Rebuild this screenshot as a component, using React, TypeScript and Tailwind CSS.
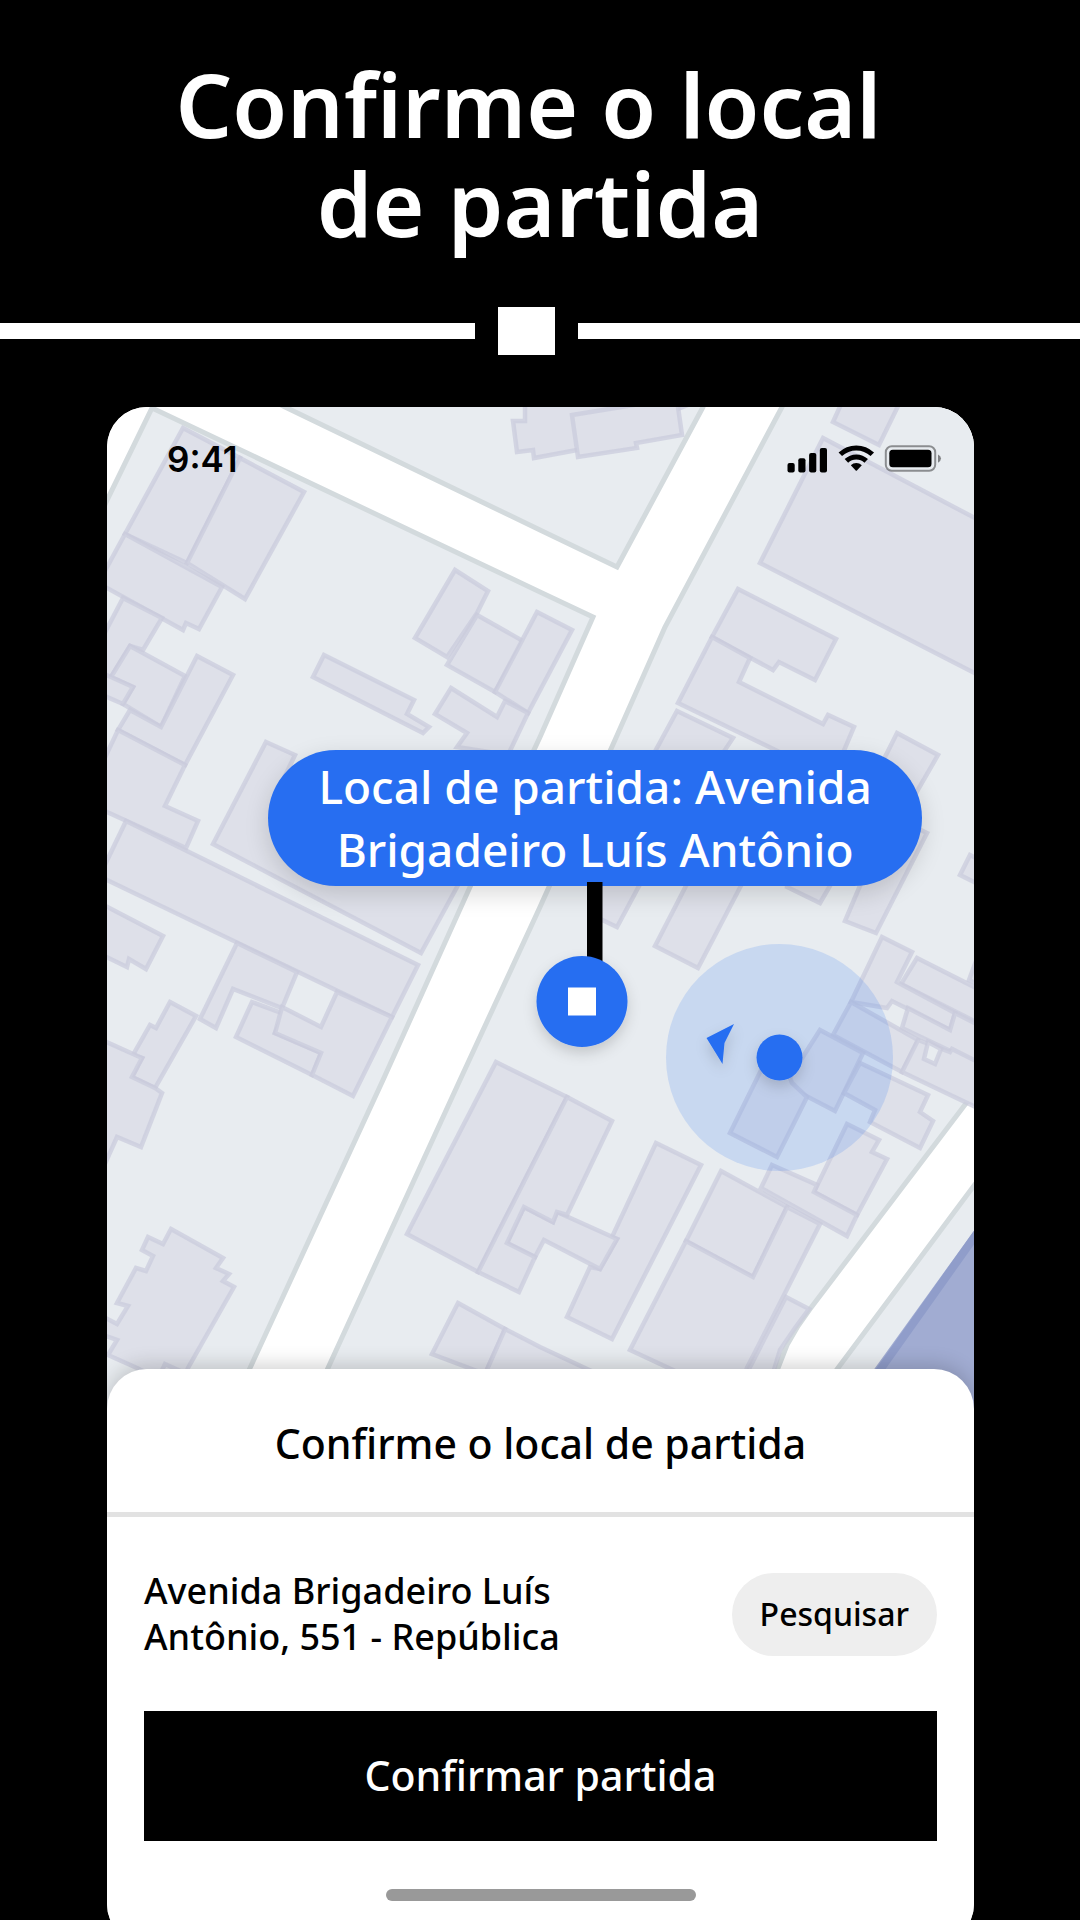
import React from 'react';

// All map geometry shares one coordinate space, see MAP_VIEW_BOX.
const MAP_VIEW_BOX = '107 407 867 1002';

const blocks = [
    '152,408 540,592 593,617 540,737 470,887 383,1080 250,1368 230,1412 90,1412 90,535',
    '285,407 540,530 617,567 703,407 703,395 262,395',
    '782,407 665,627 615,740 540,907 460,1080 328,1368 308,1412 760,1412 778,1368 787,1345 798,1326 810,1309 964,1106 990,1072 990,395 788,395',
    '990,1164 973,1187 838,1368 806,1412 990,1412'
];

const buildings = [
    // west side
    '183,428 240,458 187,563 125,534',
    '240,458 304,492 245,599 187,563',
    '125,534 222,587 199,629 186,623 183,630 107,588 100,585 100,580',
    '123,598 162,618 143,650 130,646 111,677 100,696 100,642',
    '130,646 185,676 161,727 123,704 133,687 111,677',
    '100,672 111,677 133,687 123,704 100,694',
    '197,656 233,675 185,765 118,730 130,710 161,727',
    '118,730 185,765 165,806 198,821 186,848 107,812 100,809 100,768',
    '126,821 418,965 392,1017 107,880 100,876 100,875',
    '266,742 295,755 283,780 482,840 457,887 421,953 213,844',
    '100,903 163,936 146,969 129,959 127,967 100,954',
    '237,943 297,972 282,1008 233,989 216,1028 200,1019',
    '252,1002 284,1014 275,1033 321,1053 312,1075 236,1037',
    '337,992 392,1017 353,1096 312,1075 321,1053 275,1033 282,1007 321,1027',
    '170,1002 196,1016 155,1088 132,1077 142,1058 133,1055 150,1025 156,1028',
    '100,1039 142,1058 132,1077 155,1088 162,1093 141,1147 117,1137 100,1175',
    '171,1229 223,1258 216,1268 229,1274 223,1281 234,1287 188,1368 180,1390 137,1368 108,1355 117,1340 100,1334 100,1315 117,1324 128,1306 117,1303 136,1268 146,1271 153,1256 142,1250 148,1237 163,1244',
    '165,1364 200,1380 190,1400 155,1385',
    // between the two streets
    '455,570 488,591 477,613 447,657 415,638',
    '477,615 523,641 495,692 447,665',
    '537,612 572,630 528,713 495,692',
    '324,655 414,700 407,714 429,727 423,733 313,677',
    '451,688 497,717 505,701 528,713 508,755 457,747 467,733 435,714',
    '525,400 525,421 513,421 517,452 533,450 534,458 577,450 700,400',
    '572,415 640,404 677,400 682,435 636,443 637,448 578,457',
    // east side
    '843,400 833,422 879,445 901,400',
    '823,438 990,526 990,681 760,563',
    '738,589 836,639 815,680 779,662 773,670 712,637',
    '712,637 750,658 739,682 823,724 828,715 854,727 840,760 800,762 678,703',
    '677,711 733,738 660,847 617,927 590,914 645,770',
    '720,820 770,830 698,968 655,946',
    '790,860 845,860 820,903 787,887',
    '897,733 938,755 912,800 870,787',
    '890,815 927,833 876,933 845,921',
    '990,865 970,855 960,875 990,890',
    '990,950 982,945 969,980 990,990',
    '917,958 990,995 990,1029 901,984',
    '882,937 912,952 897,982 955,1013 950,1030 892,1001 887,1008 851,1002',
    '851,1002 918,1040 902,1072 833,1035',
    '908,1008 950,1030 955,1013 990,1031 990,1070 902,1028',
    '918,1040 950,1052 952,1049 990,1068 990,1114 902,1072',
    '820,1030 863,1053 835,1111 785,1085',
    '776,1040 792,1083 807,1097 777,1157 730,1133',
    '860,1063 928,1095 920,1112 933,1121 920,1148 870,1122 875,1110 844,1093',
    '847,1124 879,1140 872,1152 887,1159 857,1215 814,1192',
    '772,1165 817,1185 814,1192 857,1215 847,1236 761,1188',
    '721,1171 787,1207 753,1277 686,1241',
    '787,1207 820,1224 747,1368 735,1400 673,1370 630,1350 686,1241 753,1277',
    '786,1297 809,1309 795,1328 780,1350 765,1400 733,1400',
    '656,1143 701,1165 612,1339 567,1317 590,1267 600,1269 617,1239 612,1237',
    '557,1212 617,1239 600,1269 544,1240 535,1257 507,1243 524,1207 553,1222',
    '496,1062 567,1097 478,1272 407,1234',
    '567,1097 612,1121 567,1215 557,1212 553,1222 524,1207 507,1243 535,1257 519,1292 478,1272',
    '458,1303 505,1329 485,1374 432,1354',
    '505,1329 540,1347 630,1389 620,1410 485,1374'
];

const MapCanvas = () => (
    <svg viewBox={MAP_VIEW_BOX} className="block w-full h-auto bg-white" aria-hidden="true">
        <g fill="#e8ecf0" stroke="#d3dadd" strokeWidth="5">
            {blocks.map((points) => (
                <polygon key={points} points={points} />
            ))}
        </g>
        <g fill="#dee0e9" stroke="#c9cadb" strokeOpacity="0.7" strokeWidth="4.5">
            {buildings.map((points) => (
                <polygon key={points} points={points} />
            ))}
            <polygon points="928,1042 941,1049 935,1064 924,1059" fill="#e8ecf0" />
        </g>
        <polygon points="990,1209 973,1232 875,1368 843,1412 990,1412" fill="#a1acd2" />
        <path d="M990 1215 L973 1239 L880 1370 L850 1412" fill="none" stroke="#909dca" strokeWidth="8" />
    </svg>
);

const MapPins = () => (
    <svg viewBox={MAP_VIEW_BOX} className="absolute inset-0 w-full h-full" aria-hidden="true">
        <defs>
            <filter id="pin-shadow" x="-50%" y="-50%" width="200%" height="200%">
                <feDropShadow dx="0" dy="6" stdDeviation="7" floodColor="#000" floodOpacity="0.16" />
            </filter>
        </defs>
        <circle cx="779.5" cy="1057.5" r="113.5" fill="#276ef1" fillOpacity="0.16" />
        <rect x="587" y="882" width="15.5" height="90" fill="#000" />
        <g fill="#276ef1" filter="url(#pin-shadow)">
            <circle cx="582" cy="1001.5" r="45.5" />
            <circle cx="779.5" cy="1057.5" r="23" />
            <polygon points="734,1024 724.5,1043 722.5,1064 706.5,1038" />
        </g>
        <rect x="568" y="987.5" width="28" height="28" fill="#fff" />
    </svg>
);

const StatusIcons = () => (
    <svg width="156" height="30" viewBox="0 0 156 30" aria-hidden="true">
        <rect x="1.5" y="19" width="7.2" height="9.5" rx="2" />
        <rect x="12.3" y="14.3" width="7.2" height="14.2" rx="2" />
        <rect x="23.1" y="9" width="7.2" height="19.5" rx="2" />
        <rect x="33.8" y="4" width="7.2" height="24.5" rx="2" />
        <g fill="none" stroke="#000" strokeWidth="5">
            <path d="M54.3 10.3 A23.2 23.2 0 0 1 86.3 10.3" />
            <path d="M60.4 16.9 A14.2 14.2 0 0 1 80.2 16.9" />
        </g>
        <path d="M64.8 21.3 A8 8 0 0 1 75.8 21.3 L70.9 26.5 Q70.3 27 69.7 26.5 Z" />
        <rect x="99.8" y="2.2" width="49.4" height="24.6" rx="6" fill="none" stroke="#000" strokeOpacity="0.4" strokeWidth="2" />
        <rect x="103.3" y="5.8" width="42.2" height="17.4" rx="3.5" />
        <path d="M152 10.5 Q155 12 155 14.5 Q155 17 152 18.8 Z" fillOpacity="0.45" />
    </svg>
);

const StatusBar = () => (
    <div className="absolute inset-x-0 top-0 flex items-center justify-between pt-8 pl-[60px] pr-8">
        <span className="font-['Inter'] font-semibold text-[35px] leading-10">9:41</span>
        <StatusIcons />
    </div>
);

const Divider = () => (
    <div className="flex items-center" aria-hidden="true">
        <div className="w-[44%] h-4 bg-white" />
        <div className="mx-[23px] w-[57px] h-12 bg-white" />
        <div className="flex-1 h-4 bg-white" />
    </div>
);

export default function App() {
    return (
        <div className="min-h-screen flex flex-col bg-black overflow-hidden text-black font-['Noto_Sans',sans-serif]">
            <h1 className="pt-[54px] pb-[55px] text-center text-white font-semibold text-[89px] leading-[99px] whitespace-pre">
                {'Confirme o local \nde partida'}
            </h1>
            <Divider />

            <main className="flex-1 flex flex-col mt-[52px] ml-[107px] mr-[106px] -mb-6 rounded-[40px] overflow-hidden bg-white">
                <div className="relative">
                    <MapCanvas />
                    <StatusBar />
                    <div className="absolute left-[18.6%] top-[34.2%] w-[75.4%] py-[5px] rounded-full bg-[#276ef1] text-white text-center font-medium text-[46px] leading-[63px] whitespace-nowrap shadow-[0_8px_24px_rgba(0,0,0,0.15)]">
                        Local de partida: Avenida
                        <br />
                        Brigadeiro Luís Antônio
                    </div>
                    <MapPins />
                </div>

                <section className="relative flex-1 -mt-10 rounded-t-[40px] bg-white shadow-[0_-4px_20px_rgba(0,0,0,0.18)]">
                    <h2 className="pt-12 pb-[43px] border-b-[5px] border-[#e2e2e2] text-center font-medium text-[41px] leading-[52px]">
                        Confirme o local de partida
                    </h2>
                    <div className="px-[37px] pt-[51px]">
                        <div className="flex items-center justify-between">
                            <p className="font-medium text-[36px] leading-[46px] whitespace-nowrap">
                                Avenida Brigadeiro Luís
                                <br />
                                Antônio, 551 - República
                            </p>
                            <button type="button" className="px-7 h-[83px] rounded-full bg-[#eeeeee] font-medium text-[32px]">
                                Pesquisar
                            </button>
                        </div>
                        <button type="button" className="mt-[51px] w-full h-[130px] bg-black text-white font-medium text-[41px]">
                            Confirmar partida
                        </button>
                    </div>
                    <div className="mt-12 mx-auto w-[310px] h-3 rounded-full bg-[#999999]" />
                </section>
            </main>
        </div>
    );
}
